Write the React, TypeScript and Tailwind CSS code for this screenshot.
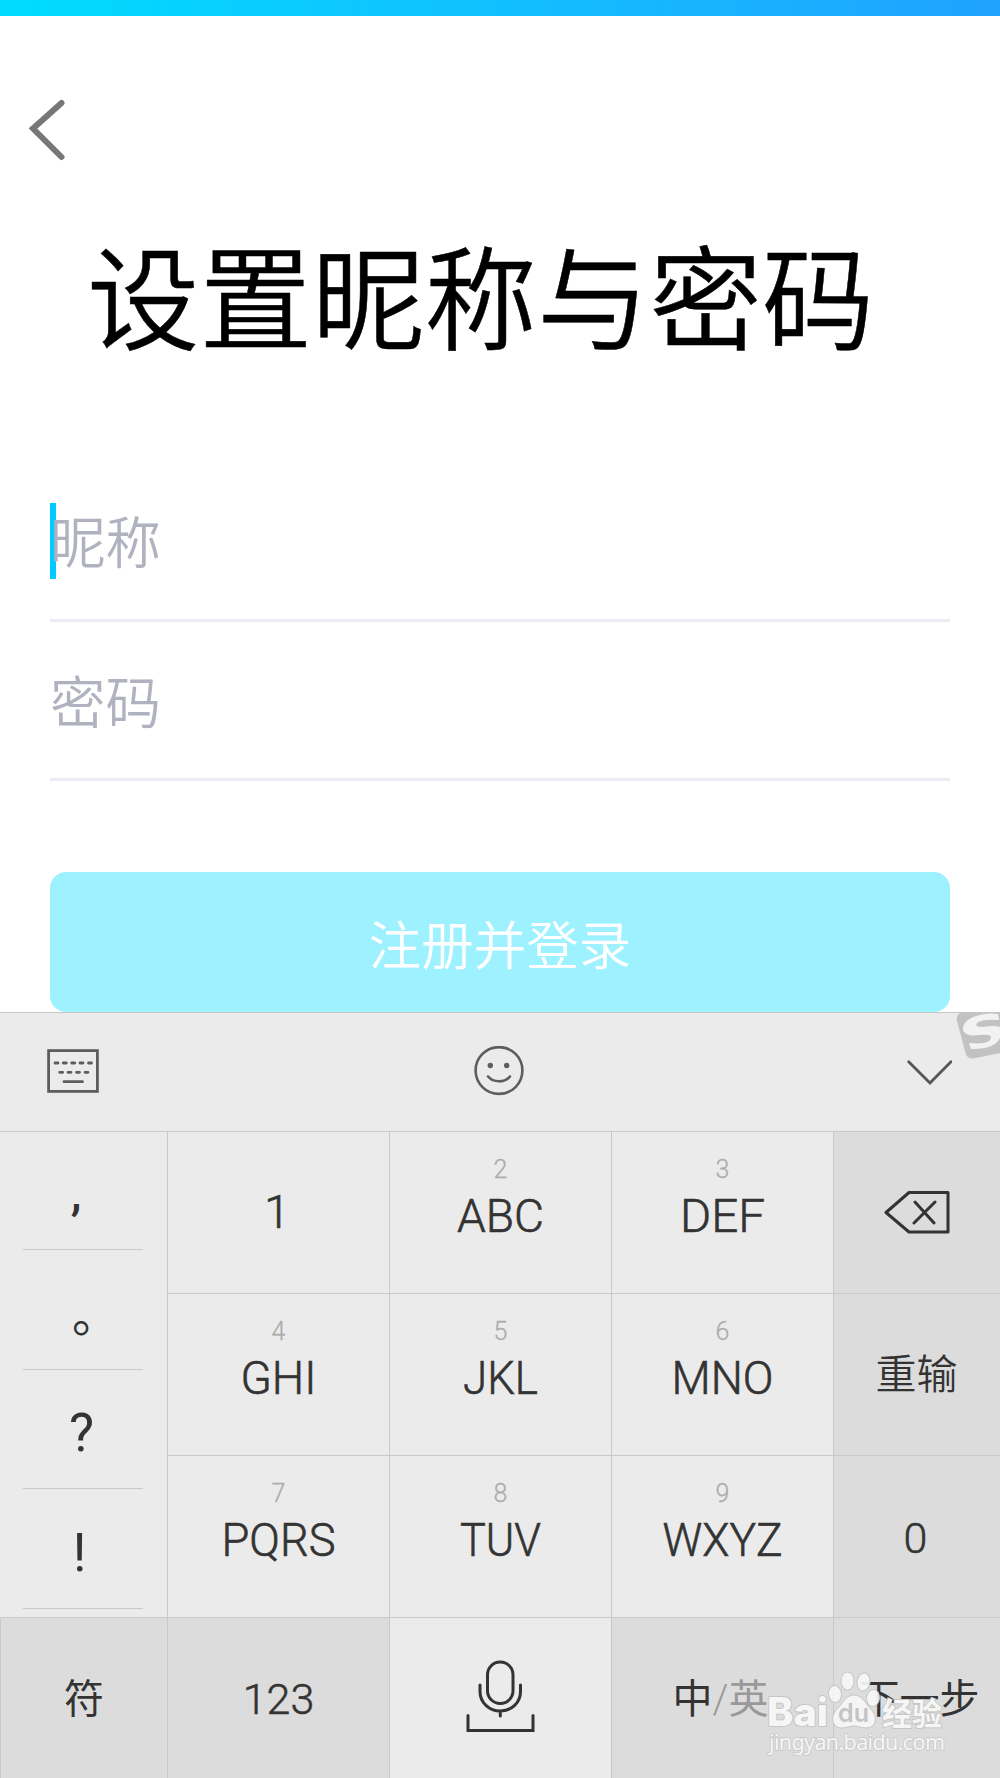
const ink = "#333333";

const letterKeys = [
  { n: "", t: "1", w: 0 },
  { n: "2", t: "ABC", w: 84 },
  { n: "3", t: "DEF", w: 82 },
  { n: "4", t: "GHI", w: 73 },
  { n: "5", t: "JKL", w: 72 },
  { n: "6", t: "MNO", w: 99 },
  { n: "7", t: "PQRS", w: 111 },
  { n: "8", t: "TUV", w: 78 },
  { n: "9", t: "WXYZ", w: 117 },
];

function Field({ label, focused }: { label: string; focused?: boolean }) {
  return (
    <div className="relative flex items-center border-b-[3px] border-[#ececf5] text-[55.5px] text-[#b0b2c0]">
      {focused && <span className="absolute left-0 top-[41px] h-[76px] w-[6px] bg-[#00caff]" />}
      <span className="relative pb-px leading-none">{label}</span>
    </div>
  );
}

function KeyboardIcon() {
  return (
    <svg width="52" height="44" viewBox="0 0 52 44" fill="none" stroke="#5c5e5e" strokeWidth="2.8" strokeLinecap="round">
      <rect x="1.6" y="1.6" width="48.8" height="40.8" strokeLinecap="butt" />
      <path d="M8 14h3M16.3 14h3M24.7 14h3M33 14h3M41.5 14h3M12.7 23.3h3M21 23.3h3M29.5 23.3h3M38 23.3h3M17 32.7h18.5" />
    </svg>
  );
}

function SmileIcon() {
  return (
    <svg width="50" height="50" viewBox="0 0 50 50" fill="none" stroke="#5c5e5e" strokeWidth="2.6" strokeLinecap="round">
      <circle cx="25" cy="24.500" r="23.4" />
      <circle cx="16.3" cy="19.5" r="2.7" fill="#5c5e5e" stroke="none" />
      <circle cx="32.7" cy="19.5" r="2.7" fill="#5c5e5e" stroke="none" />
      <path d="M14 30.500c5.500 6.300 16.500 6.300 22 0" />
    </svg>
  );
}

function Toolbar() {
  return (
    <div className="relative flex h-[118px] items-center justify-between overflow-hidden pb-[3px] pl-[47px] pr-[48px]">
      <KeyboardIcon />
      <span className="-ml-[9px]"><SmileIcon /></span>
      <svg className="mt-[2px]" width="45" height="26" viewBox="0 0 45 26" fill="none" stroke="#555757" strokeWidth="2.8" strokeLinecap="round">
        <path d="M1.700 2.700L23 24L44 2.700" />
      </svg>
      <svg className="absolute right-0 top-0" width="44" height="48" viewBox="0 0 44 48">
        <path d="M4 0H44V40L20 45Q11 47 9.500 40L1 8Q0 2 4 0Z" fill="#c2c2c2" />
        <path d="M42 1Q30 -1 17 4Q6 9 7 17Q9 24 23 22Q35 21 35 24Q35 32 13 30L15 36Q44 37 46 18L44 14Q38 12 27 14Q18 14 21 10Q26 6 43 7Z" fill="#f2f2f2" />
      </svg>
    </div>
  );
}

function MicIcon() {
  return (
    <svg width="70" height="74" viewBox="0 0 70 74" fill="none" stroke={ink} strokeWidth="3" strokeLinecap="round">
      <rect x="21.500" y="3" width="25.500" height="41.500" rx="12.700" />
      <path d="M14 26v6.500c0 11 9 19.500 20.300 19.500s20.200-8.500 20.200-19.500v-6.500M34.300 52v5M2 56.500v15h65v-15" />
    </svg>
  );
}

function Watermark() {
  return (
    <div className="absolute left-[766px] top-[1669px] h-[90px] w-[190px]">
      <svg className="overflow-visible" width="190" height="92" viewBox="0 0 190 92">
        <g fill="#f6f6f6" fillOpacity=".93" stroke="#c6c6c6" strokeWidth="1">
          <ellipse cx="81.500" cy="12" rx="6.500" ry="9" />
          <ellipse cx="97.500" cy="13" rx="6.500" ry="9" transform="rotate(8 97.500 13)" />
          <ellipse cx="69" cy="25" rx="6.500" ry="8.500" transform="rotate(-8 69 25)" />
          <ellipse cx="107" cy="29" rx="6.500" ry="8.500" transform="rotate(6 107 29)" />
          <path d="M88 26c8 0 11 8 16 13c9 9 6 20-4 20c-5 0-7-2-12-2s-7 2-12 2c-10 0-13-11-4-20c5-5 8-13 16-13z" />
        </g>
        <g fill="#f6f6f6" stroke="#c6c6c6" strokeWidth="2" paintOrder="stroke" fontFamily="Inter, sans-serif" fontWeight="800">
          <text x="1" y="57" fontSize="39" textLength="61" lengthAdjust="spacingAndGlyphs">Bai</text>
          <text x="72" y="53" fontSize="25" fontWeight="600" textLength="31" lengthAdjust="spacingAndGlyphs" fill="#c4c4c4" stroke="none">du</text>
          <text x="116" y="55.500" fontSize="31" fontFamily="Noto Sans CJK SC, sans-serif" fontWeight="700" textLength="60" lengthAdjust="spacingAndGlyphs">经验</text>
        </g>
        <text x="3" y="81" fontSize="21.500" fontFamily="Noto Sans, sans-serif" fontWeight="400" fill="#f6f6f6" stroke="#c6c6c6" strokeWidth="1.500" paintOrder="stroke" textLength="176" lengthAdjust="spacing">jingyan.baidu.com</text>
      </svg>
    </div>
  );
}

const punctuation = [
  { c: ",", cls: "h-[118px] pr-[14px] pt-[5px] font-medium text-[48px]" },
  { c: "。", cls: "h-[120px] pl-[25px] pt-3 text-[47px] font-normal" },
  { c: "?", cls: "h-[119px] pt-[9px] pr-[3px] text-[53px] font-normal" },
  { c: "!", cls: "h-[120px] pt-[9px] pr-[7px] text-[53px] font-normal" },
];

function Keypad() {
  return (
    <div className="grid h-[647px] grid-cols-[167px_222px_222px_222px_167px] grid-rows-[162px_162px_162px_161px] border-t border-[#c9c9c9] font-['Roboto','Noto_Sans_CJK_SC',sans-serif] font-[350] text-[#333]">
      <div className="row-span-3 flex flex-col items-center border-b border-[#c9c9c9] pr-px">
        {punctuation.map(({ c, cls }) => (
          <div key={c} className={"flex w-[120px] items-center justify-center border-b border-[#c9c9c9] leading-none " + cls}>
            {c}
          </div>
        ))}
      </div>
      {letterKeys.slice(0, 3).map((k) => <LetterKey key={k.t} {...k} />)}
      <div className="flex items-center justify-center border-b border-l border-[#c9c9c9] bg-[#dcdcdc]">
        <svg width="66" height="44" viewBox="0 0 66 44" fill="none" stroke={ink} strokeWidth="3" strokeLinecap="round" strokeLinejoin="round">
          <path d="M2 21.500L25 1.500H64V41H25ZM31 11L50 32M51 11L30 32" />
        </svg>
      </div>
      {letterKeys.slice(3, 6).map((k) => <LetterKey key={k.t} {...k} />)}
      <div className="flex items-center justify-center border-b border-l border-[#c9c9c9] bg-[#dcdcdc] pr-px pt-[2px] text-[41px]">重输</div>
      {letterKeys.slice(6).map((k) => <LetterKey key={k.t} {...k} />)}
      <div className="flex items-center justify-center border-b border-l border-[#c9c9c9] bg-[#dcdcdc] pr-[3px] pt-[3px] text-[43px] [-webkit-text-stroke:0.5px_#333]">0</div>
      <div className="flex items-center justify-center border-l border-[#c9c9c9] bg-[#dcdcdc] pt-[2px] text-[40px] font-normal">符</div>
      <div className="flex items-center justify-center border-l border-[#c9c9c9] bg-[#dcdcdc] pt-[2px] text-[43px] [-webkit-text-stroke:0.5px_#333]">123</div>
      <div className="flex items-start justify-center border-l border-[#c9c9c9] pt-[41px]"><MicIcon /></div>
      <div className="flex items-center justify-center border-l border-[#c9c9c9] bg-[#dcdcdc] pr-1 pt-[2px] text-[40px] font-normal">中<span className="text-[#999]"><span className="font-light">/</span>英</span></div>
      <div className="flex items-center justify-center whitespace-nowrap border-l border-[#c9c9c9] bg-[#dcdcdc] pl-[5px] pt-[2px] text-[40px] font-normal">下一步</div>
    </div>
  );
}

function LetterKey({ n, t, w }: { n: string; t: string; w: number }) {
  return (
    <div className={"flex flex-col items-center border-b border-l border-[#c9c9c9] " + (n ? "pt-[24px]" : "pt-[20px] pr-[3px]")}>
      <span className="h-[33px] text-[25px] leading-[28px] text-[#acacac] [-webkit-text-stroke:0.3px_#acacac]">{n}</span>
      {w ? (
        <svg width="130" height="54" viewBox="0 0 130 54">
          <text x={(130 - w) / 2 - 2} y="42.500" fontSize="46" fill={ink} stroke={ink} strokeWidth="0.600" textLength={w + 3} lengthAdjust="spacingAndGlyphs">{t}</text>
        </svg>
      ) : (
        <span className="text-[47px] leading-[54px] [-webkit-text-stroke:0.6px_#333]">{t}</span>
      )}
    </div>
  );
}

export default function App() {
  return (
    <div className="relative flex h-[1778px] w-[1000px] flex-col overflow-hidden bg-white font-['Noto_Sans_CJK_SC',sans-serif] font-[350]">
      <div className="h-[16px] shrink-0 bg-linear-to-r from-[#00dcff] to-[#1fa2ff]" />
      <header className="flex h-[196px] shrink-0 items-start pl-[29px] pt-[83px]">
        <svg width="38" height="62" viewBox="0 0 38 62" fill="none" stroke="#777" strokeWidth="6" strokeLinecap="round">
          <path d="M32.500 4L4 29.500L32.500 58" />
        </svg>
      </header>
      <h1 className="h-[250px] shrink-0 pl-[87px] pt-[20px] text-[112.5px] font-[350] leading-[120px] text-black [-webkit-text-stroke:0.5px_black]">设置昵称与密码</h1>
      <div className="grid h-[319px] shrink-0 grid-rows-[160px_159px] px-[50px]">
        <Field label="昵称" focused />
        <Field label="密码" />
      </div>
      <div className="flex h-[231px] shrink-0 items-end px-[50px]">
        <button className="flex h-[140px] w-full items-center justify-center rounded-[16px] bg-[#9ef1ff] text-[52.5px] text-white">注册并登录</button>
      </div>
      <section className="shrink-0 border-t border-[#c6c6c6] bg-[#ebebeb]">
        <Toolbar />
        <Keypad />
      </section>
      <Watermark />
    </div>
  );
}
